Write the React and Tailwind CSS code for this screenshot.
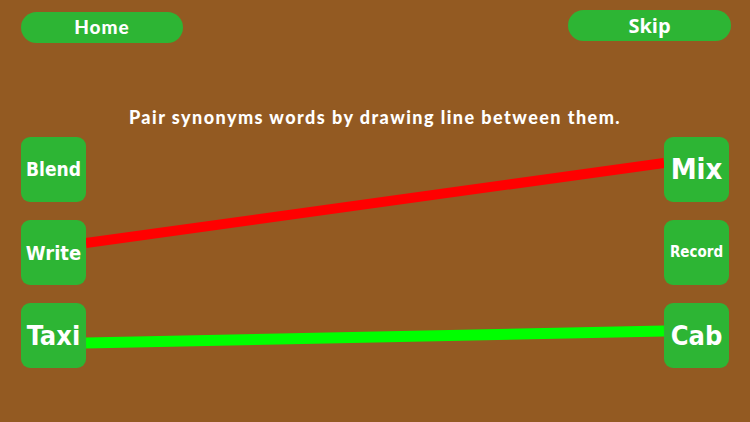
import React from 'react'

const left = [
  { word: 'Blend', size: 'text-[19px]' },
  { word: 'Write', size: 'text-[20px]' },
  { word: 'Taxi', size: 'text-[27px]' },
]

const right = [
  { word: 'Mix', size: 'text-[29px]' },
  { word: 'Record', size: 'text-[15px]' },
  { word: 'Cab', size: 'text-[27px]' },
]

function Tile({ word, size }) {
  return (
    <div className="w-[65px] h-[65px] rounded-[9px] bg-[#2db534] flex items-center justify-center">
      <span
        className={`${size} font-bold text-white leading-none`}
        style={{ fontFamily: '"DejaVu Sans Condensed", "DejaVu Sans", sans-serif' }}
      >
        {word}
      </span>
    </div>
  )
}

export default function App() {
  return (
    <div className="relative w-[750px] h-[422px] overflow-hidden bg-[#935a22]">
      {/* drawn connections */}
      <svg className="absolute inset-0" width="750" height="422">
        <line x1="86" y1="243" x2="664" y2="163" stroke="#ff0000" strokeWidth="10" />
        <line x1="86" y1="343" x2="664" y2="331" stroke="#00ff00" strokeWidth="11" />
      </svg>

      <div className="relative flex flex-col h-full">
        {/* Header */}
        <div className="flex justify-between items-start pl-[21px] pr-[19px]">
          <button
            className="mt-[12px] w-[162px] h-[31px] rounded-full bg-[#2db534] text-white text-[19px] font-black tracking-[1px]"
            style={{ fontFamily: 'Lato, sans-serif' }}
          >
            Home
          </button>
          <button
            className="mt-[10px] w-[163px] h-[31px] rounded-full bg-[#2db534] text-white text-[20px] font-bold"
            style={{ fontFamily: '"Open Sans", sans-serif' }}
          >
            Skip
          </button>
        </div>

        {/* Instruction */}
        <p
          className="mt-[65px] text-center text-white text-[18px] font-black tracking-[1.45px] leading-none"
          style={{ fontFamily: 'Lato, sans-serif' }}
        >
          Pair synonyms words by drawing line between them.
        </p>

        {/* Tiles */}
        <div className="mt-[11px] flex justify-between px-[21px]">
          <div className="flex flex-col gap-[18px]">
            {left.map((t) => (
              <Tile key={t.word} {...t} />
            ))}
          </div>
          <div className="flex flex-col gap-[18px]">
            {right.map((t) => (
              <Tile key={t.word} {...t} />
            ))}
          </div>
        </div>
      </div>
    </div>
  )
}
